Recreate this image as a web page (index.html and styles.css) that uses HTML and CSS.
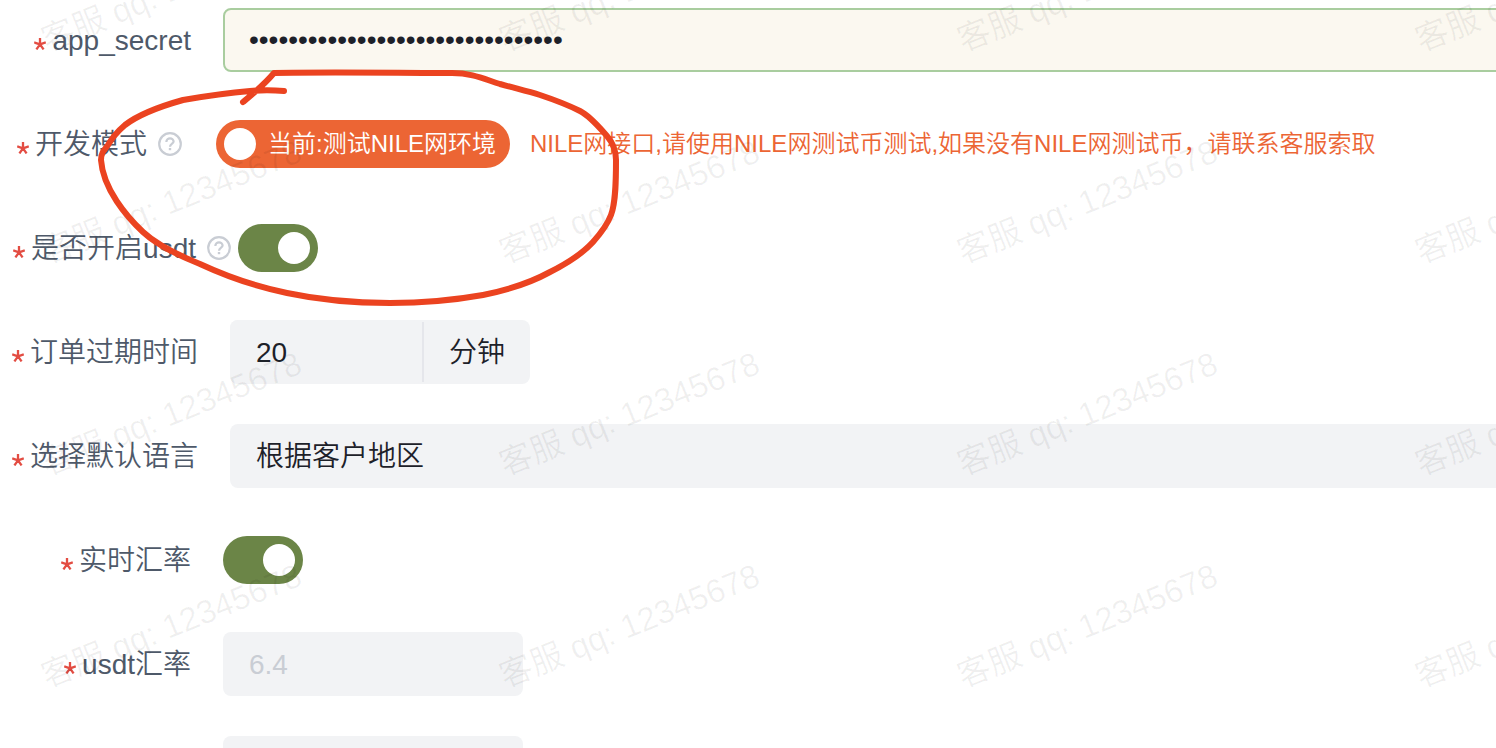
FILE: index.html
```html
<!DOCTYPE html>
<html lang="zh-CN">
    <head>
        <meta charset="utf-8">
        <meta name="viewport" content="width=device-width, initial-scale=1">
        <link rel="stylesheet" href="styles.css">
        <title>usdt</title>
    </head>
    <body>
        <svg class="symbols" aria-hidden="true">
            <symbol id="star" viewBox="0 0 12 12">
                <path d="M6 6.4V0M6 6.4L0.2 4.4M6 6.4L11.8 4.4M6 6.4L2.4 11.4M6 6.4L9.6 11.4" fill="none" stroke="currentColor" stroke-width="2.3"/>
            </symbol>
            <symbol id="question" viewBox="0 0 24 24">
                <circle cx="12" cy="12" r="10.8" fill="none" stroke="currentColor" stroke-width="2.2"/>
                <path d="M8.4 10V9.6A3.6 3.2 0 0 1 15.6 9.6C15.6 11.6 12 11.8 12 14.8" fill="none" stroke="currentColor" stroke-width="2.2"/>
                <path d="M10.8 16H13.2V18.2H10.8Z" fill="currentColor"/>
            </symbol>
        </svg>
        <main class="page">
            <form class="form">
                <div class="row">
                    <label class="label" for="secret"><svg class="star"><use href="#star"/></svg>app_secret</label>
                    <input class="field secret" type="password" id="secret" autocomplete="off" value="0123456789abcdef0123456789abcdef">
                </div>
                <div class="row">
                    <label class="label label-mode" for="mode"><svg class="star"><use href="#star"/></svg>开发模式<svg class="question"><use href="#question"/></svg></label>
                    <label class="mode">
                        <input class="knob" type="checkbox" id="mode">
                        <span>当前:测试NILE网环境</span>
                    </label>
                    <span class="tip">NILE网接口,请使用NILE网测试币测试,如果没有NILE网测试币，请联系客服索取</span>
                </div>
                <div class="row">
                    <label class="label label-usdt" for="usdt"><svg class="star"><use href="#star"/></svg>是否开启usdt<svg class="question"><use href="#question"/></svg></label>
                    <input class="switch" type="checkbox" id="usdt" checked>
                </div>
                <div class="row">
                    <label class="label label-long" for="expire"><svg class="star"><use href="#star"/></svg>订单过期时间</label>
                    <div class="group">
                        <input class="field" type="text" id="expire" value="20">
                        <span class="unit">分钟</span>
                    </div>
                </div>
                <div class="row">
                    <label class="label label-long" for="lang"><svg class="star"><use href="#star"/></svg>选择默认语言</label>
                    <select class="field" id="lang">
                        <option>根据客户地区</option>
                    </select>
                </div>
                <div class="row">
                    <label class="label" for="live"><svg class="star"><use href="#star"/></svg>实时汇率</label>
                    <input class="switch" type="checkbox" id="live" checked>
                </div>
                <div class="row">
                    <label class="label" for="rate"><svg class="star"><use href="#star"/></svg>usdt汇率</label>
                    <input class="field short" type="text" id="rate" value="6.4" disabled>
                </div>
                <div class="row">
                    <span class="label"></span>
                    <input class="field short" type="text" aria-label="rate">
                </div>
            </form>

            <div class="watermark" aria-hidden="true">
                <span>客服 qq: 12345678</span>
                <span>客服 qq: 12345678</span>
                <span>客服 qq: 12345678</span>
                <span>客服 qq: 12345678</span>
                <span>客服 qq: 12345678</span>
                <span>客服 qq: 12345678</span>
                <span>客服 qq: 12345678</span>
                <span>客服 qq: 12345678</span>
                <span>客服 qq: 12345678</span>
                <span>客服 qq: 12345678</span>
                <span>客服 qq: 12345678</span>
                <span>客服 qq: 12345678</span>
                <span>客服 qq: 12345678</span>
                <span>客服 qq: 12345678</span>
                <span>客服 qq: 12345678</span>
                <span>客服 qq: 12345678</span>
            </div>

            <svg class="circle" viewBox="0 0 640 320" aria-hidden="true">
                <path d="M243 102C254 93 264 85 274 73C330 72 400 73 452 73C472 73 484 79 500 84C514 88 527 91 540 95C555 100 570 106 580 111C590 116 599 127 607 136C613 143 616 150 616 160C616 178 616 202 611 215C608 223 601 233 593 242C583 253 568 263 550 272C530 283 508 290 483 295C455 300 422 303 390 303C354 303 315 299 287 293C258 287 228 277 200 264C180 256 158 246 143 232C127 217 103 189 101 160C101 153 104 150 108 145C112 138 118 131 125 125C138 115 158 107 183 100C206 96 226 93 250 91C262 90 272 90 284 91"/>
            </svg>
        </main>
    </body>
</html>
```
FILE: styles.css
```css
* {
    box-sizing: border-box;
}

body {
    margin: 0;
    font: 28px/40px "Liberation Sans", "Noto Sans CJK SC", sans-serif;
    font-weight: 350;
    color: #1d2129;
    background-color: #fff;
}

.symbols {
    display: none;
}

.page {
    position: relative;
    height: 100vh;
    overflow: hidden;
}

/* the form runs on past the right edge */
.form {
    display: flex;
    flex-direction: column;
    gap: 40px;
    margin-right: -40px;
    padding-top: 8px;
}

.row {
    display: flex;
    align-items: center;
    height: 64px;
}

.label {
    display: flex;
    flex: none;
    align-items: center;
    justify-content: flex-end;
    width: 223px;
    padding-top: 2px;
    padding-right: 32px;
    color: #4e5969;
    white-space: nowrap;
}

.label-mode {
    width: 216px;
    padding-right: 34px;
}

.label-usdt {
    width: 238px;
    padding-right: 7px;
}

.label-long {
    width: 230px;
}

.star {
    width: 12px;
    height: 12px;
    margin-top: 6px;
    margin-right: 6px;
    color: #e34d43;
}

.question {
    width: 24px;
    height: 24px;
    margin-bottom: 2px;
    margin-left: 11px;
    color: #c9cdd4;
}

.field {
    flex: 1;
    min-width: 0;
    height: 64px;
    margin: 0;
    padding: 2px 26px 0;
    border: 0;
    border-radius: 8px;
    font: inherit;
    color: #1d2129;
    background-color: #f2f3f5;
    appearance: none;
}

.field:disabled {
    color: #c9cdd4;
}

.secret {
    padding: 0 24px;
    border: 2px solid #a9cd9f;
    background-color: #fbf8f0;
}

.short {
    flex: none;
    width: 300px;
}

.group {
    display: flex;
    width: 300px;
    border-radius: 8px;
    background-color: #f2f3f5;
}

.unit {
    width: 108px;
    margin: 2px 0;
    padding-top: 2px;
    border-left: 2px solid #e5e6eb;
    line-height: 58px;
    text-align: center;
}

.switch {
    display: flex;
    align-items: center;
    justify-content: flex-end;
    width: 80px;
    height: 48px;
    margin: 0;
    padding: 8px;
    border-radius: 24px;
    background-color: #6b8547;
    appearance: none;
}

.switch::before {
    content: "";
    width: 32px;
    height: 32px;
    border-radius: 50%;
    background-color: #fff;
}

.mode {
    display: flex;
    flex: none;
    align-items: center;
    gap: 12px;
    width: 294px;
    height: 48px;
    padding-left: 8px;
    border-radius: 24px;
    font-size: 24px;
    color: #fff;
    white-space: nowrap;
    background-color: #ec6534;
}

.knob {
    flex: none;
    width: 32px;
    height: 32px;
    margin: 0;
    border-radius: 50%;
    background-color: #fff;
    appearance: none;
}

.tip {
    margin-left: 20px;
    font-size: 24px;
    color: #ec6534;
    white-space: nowrap;
}

.watermark {
    position: absolute;
    top: -116px;
    left: -57px;
    display: grid;
    grid-template-columns: repeat(4, 458px);
    grid-auto-rows: 212px;
    place-items: center;
    font-size: 33px;
    font-weight: 400;
    color: rgba(0, 0, 0, 0.06);
    white-space: nowrap;
    pointer-events: none;
}

.watermark span {
    transform: rotate(-22deg);
}

.circle {
    position: absolute;
    top: 0;
    left: 0;
    width: 640px;
    height: 320px;
    pointer-events: none;
}

.circle path {
    fill: none;
    stroke: #eb4320;
    stroke-width: 6;
    stroke-linecap: round;
    stroke-linejoin: round;
}
```
